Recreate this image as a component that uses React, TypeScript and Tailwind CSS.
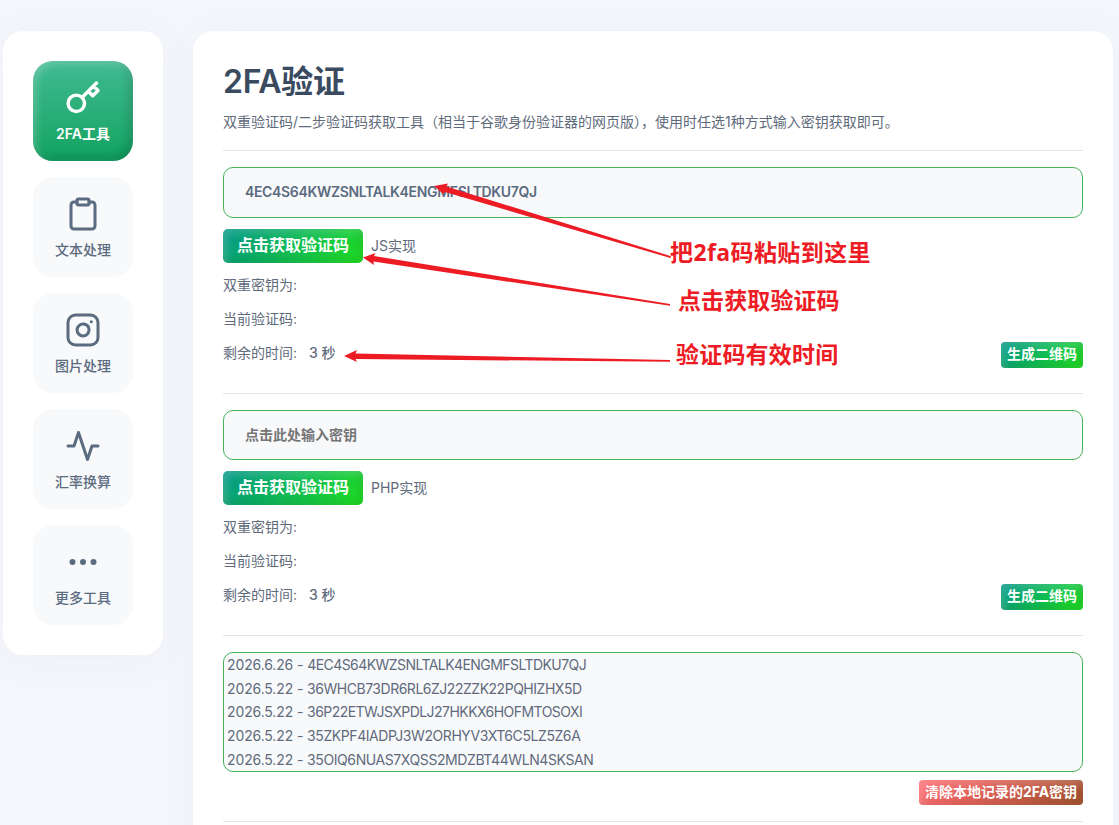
import { FiActivity, FiClipboard, FiInstagram, FiKey, FiMoreHorizontal } from 'react-icons/fi';
import type { IconType } from 'react-icons';

const navItems: { label: string; icon: IconType; active?: boolean }[] = [
  { label: '2FA工具', icon: FiKey, active: true },
  { label: '文本处理', icon: FiClipboard },
  { label: '图片处理', icon: FiInstagram },
  { label: '汇率换算', icon: FiActivity },
  { label: '更多工具', icon: FiMoreHorizontal },
];

const history = [
  { date: '2026.6.26', secret: '4EC4S64KWZSNLTALK4ENGMFSLTDKU7QJ', tracking: 'tracking-[-0.56px]' },
  { date: '2026.5.22', secret: '36WHCB73DR6RL6ZJ22ZZK22PQHIZHX5D', tracking: 'tracking-[-0.48px]' },
  { date: '2026.5.22', secret: '36P22ETWJSXPDLJ27HKKX6HOFMTOSOXI', tracking: 'tracking-[-0.54px]' },
  { date: '2026.5.22', secret: '35ZKPF4IADPJ3W2ORHYV3XT6C5LZ5Z6A', tracking: 'tracking-[-0.42px]' },
  { date: '2026.5.22', secret: '35OIQ6NUAS7XQSS2MDZBT44WLN4SKSAN', tracking: 'tracking-[-0.41px]' },
];

function Sidebar() {
  return (
    <aside className="w-[160px] h-[624px] shrink-0 bg-white rounded-[20px] p-[30px] flex flex-col gap-4 shadow-[0_5px_40px_rgba(82,105,140,0.045)]">
      {navItems.map(({ label, icon: Icon, active }) => (
        <a
          key={label}
          className={
            active
              ? 'h-[100px] w-[100px] pt-[19px] flex flex-col items-center rounded-[20px] text-white font-semibold bg-linear-to-b from-[#3fba92] to-[#0ba360] shadow-[inset_-4px_-4px_9px_rgba(0,0,0,0.16),inset_3px_3px_9px_rgba(255,255,255,0.25)]'
              : 'h-[100px] w-[100px] pt-[19px] flex flex-col items-center rounded-[20px] text-[#5b6b80] font-medium bg-[#f8f9fb]'
          }
        >
          <Icon className="size-9" strokeWidth={active ? 2.3 : 2} />
          <span className="mt-2 text-sm leading-5">{label}</span>
        </a>
      ))}
    </aside>
  );
}

function TokenSection({ value, note, inputClass }: { value?: string; note: string; inputClass: string }) {
  return (
    <section>
      <input
        className={`block w-full rounded-[10px] border border-[#45b45a] bg-[#f8f9fb] px-[21px] pb-0.5 text-sm font-semibold tracking-[-0.34px] text-[#5b6b80] placeholder:tracking-normal placeholder:text-[#757575] placeholder:font-bold ${inputClass}`}
        placeholder="点击此处输入密钥"
        defaultValue={value}
      />
      <div className="mt-[11px] flex items-center">
        <button className="h-[34px] w-[140px] rounded-[5px] pb-0.5 text-base font-bold text-white bg-linear-[135deg,#009688,#20e020] shadow-[inset_-4px_-4px_9px_rgba(0,0,0,0.1),inset_4px_4px_9px_rgba(255,255,255,0.2)]">
          点击获取验证码
        </button>
        <span className="ml-2">{note}</span>
      </div>
      <div className="mt-[5px] leading-[34px]">
        <p>双重密钥为:</p>
        <p>当前验证码:</p>
        <div className="flex justify-between">
          <p>
            剩余的时间:<span className="ml-3 font-medium">3 秒</span>
          </p>
          <button className="mt-[6px] h-[26px] w-[82px] rounded-[4px] pb-0.5 text-sm leading-none font-bold text-white bg-linear-[135deg,#009688,#20e020] shadow-[inset_-4px_-4px_9px_rgba(0,0,0,0.1),inset_4px_4px_9px_rgba(255,255,255,0.2)]">
            生成二维码
          </button>
        </div>
      </div>
    </section>
  );
}

function Divider({ className }: { className: string }) {
  return <hr className={`border-[#e3e5e7] ${className}`} />;
}

function Annotations() {
  return (
    <div className="absolute inset-0 pointer-events-none text-[23px] leading-8 font-bold text-[#ed1c24] font-['Open_Sans','Noto_Sans_CJK_SC',sans-serif]">
      <svg className="absolute inset-0" width="1119" height="825" fill="#ed1c24">
        <path d="M434 186L448 183.5L446.5 186.5L671 256.2L670.5 258L445 192L443.5 194Z" />
        <path d="M363 257.5L375.5 253L374 256L670 304L670 305.8L373.5 261.5L374 265Z" />
        <path d="M344 356L357 350L355.5 353.5L670 360L670 361.8L355.5 359L357 362Z" />
      </svg>
      <span className="absolute left-[670px] top-[236px] whitespace-nowrap tracking-[0.4px]">把2fa码粘贴到这里</span>
      <span className="absolute left-[678px] top-[284px] whitespace-nowrap tracking-[0.1px]">点击获取验证码</span>
      <span className="absolute left-[676px] top-[338px] whitespace-nowrap tracking-[0.2px]">验证码有效时间</span>
    </div>
  );
}

export default function App() {
  return (
    <div className="relative h-[825px] w-[1119px] overflow-hidden bg-[#f4f6fb] font-['Inter','Noto_Sans_CJK_SC',sans-serif] text-sm text-[#5f6b7c]">
      <div className="flex gap-[30px] pl-[3px] pt-[31px]">
        <Sidebar />
        <main className="h-[850px] w-[920px] rounded-[20px] bg-white p-[30px] shadow-[0_5px_40px_rgba(82,105,140,0.045)]">
          <h1 className="text-[32px] leading-[42px] font-semibold tracking-[-0.3px] text-[#3a4b5f]">2FA验证</h1>
          <p className="mt-[7px] leading-6">
            双重验证码/二步验证码获取工具（相当于谷歌身份验证器的网页版），使用时任选1种方式输入密钥获取即可。
          </p>
          <Divider className="my-4" />
          <TokenSection value={history[0].secret} note="JS实现" inputClass="h-[51px]" />
          <Divider className="mt-[23px] mb-4" />
          <TokenSection note="PHP实现" inputClass="h-[50px]" />
          <Divider className="mt-[23px] mb-4" />
          <ul className="h-[120px] overflow-hidden rounded-[10px] border border-[#45b45a] bg-[#f8f9fb] px-[3px] leading-[23.7px]">
            {history.map((item) => (
              <li key={item.secret} className="tracking-[-0.12px]">
                {item.date} - <span className={item.tracking}>{item.secret}</span>
              </li>
            ))}
          </ul>
          <div className="mt-2 flex justify-end">
            <button className="h-[25px] w-[164px] rounded-[4px] pb-0.5 text-sm leading-none font-bold text-white bg-linear-[135deg,#ff6f75,#e2625a_35%,#a0522d] shadow-[inset_-4px_-4px_9px_rgba(0,0,0,0.06),inset_4px_4px_9px_rgba(255,255,255,0.2)]">
              清除本地记录的2FA密钥
            </button>
          </div>
          <Divider className="mt-4" />
        </main>
      </div>
      <Annotations />
    </div>
  );
}
